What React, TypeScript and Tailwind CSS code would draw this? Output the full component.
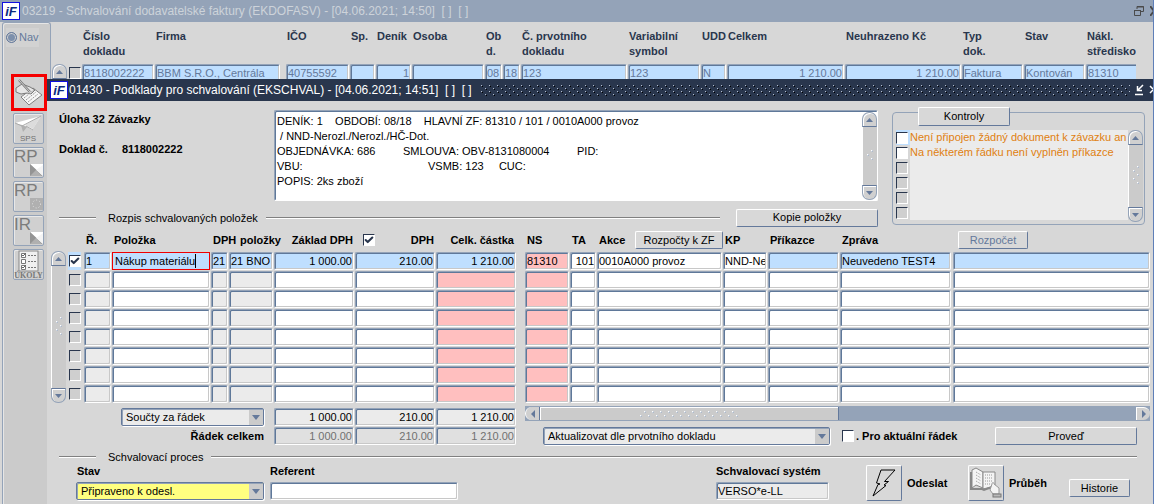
import { useState } from "react"
import type { ReactNode } from "react"
import clsx from "clsx"
import { Check } from "lucide-react"

const bevel =
  "block w-full h-[18px] rounded-[2px] border border-t-[#94a3b8] border-l-[#94a3b8] border-r-white border-b-white shadow-[inset_1px_1px_0_#5f7899,inset_-1px_-1px_0_#c8c8c8] px-px text-[11px] leading-4 outline-none"

const raised =
  "rounded-[2px] border border-t-white border-l-white border-b-[#64799b] border-r-[#64799b] bg-[#d8d8d8] text-[11px] font-normal leading-none"

const tones = {
  white: "bg-white text-black",
  blue: "bg-[#bfdfff] text-black",
  pink: "bg-[#ffbfbf] text-black",
  gray: "bg-[#ebebeb] text-black",
  muted: "bg-[#e0e0e0] text-[#707070]",
  dim: "bg-[#bfdfff] text-[#64799b]",
}

type Tone = keyof typeof tones

interface FieldProps {
  label: string
  value?: string
  tone?: Tone
  right?: boolean
  id?: string
}

function Field({ label, value = "", tone = "white", right, id }: FieldProps) {
  return (
    <input
      id={id}
      aria-label={id ? undefined : label}
      defaultValue={value}
      className={clsx(bevel, tones[tone], right && "text-right")}
    />
  )
}

interface TickProps {
  label?: string
  checked?: boolean
  tone?: "white" | "gray"
  id?: string
}

function Tick({ label, checked = false, tone = "white", id }: TickProps) {
  const [on, setOn] = useState(checked)
  return (
    <span className="relative block size-[12px] shrink-0">
      <input
        id={id}
        type="checkbox"
        aria-label={label}
        checked={on}
        onChange={(e) => setOn(e.target.checked)}
        className={clsx(
          "block size-[12px] appearance-none border border-t-[#29364d] border-l-[#29364d] border-r-white border-b-white",
          tone === "white" ? "bg-white" : "bg-[#cfcfcf]"
        )}
      />
      {on && (
        <Check
          size={10}
          strokeWidth={5}
          className="pointer-events-none absolute left-px top-px text-[#29364d]"
        />
      )}
    </span>
  )
}

interface DropDownProps {
  id?: string
  label?: string
  value: string
  tone?: string
  className?: string
}

function DropDown({ id, label, value, tone = "bg-[#ebebeb]", className }: DropDownProps) {
  return (
    <span
      className={clsx(
        "relative block h-[18px] rounded-[2px] border border-[#64799b] shadow-[inset_1px_1px_0_#94a3b8,1px_1px_0_#fff]",
        tone,
        className
      )}
    >
      <select
        id={id}
        aria-label={label}
        className="block h-4 w-full appearance-none bg-transparent pl-1 pr-4 text-[11px] leading-4 outline-none"
      >
        <option>{value}</option>
      </select>
      <span className="pointer-events-none absolute right-0 top-px flex h-[15px] w-[14px] items-center justify-center bg-[#cbcbcb]">
        <svg width="8" height="5" viewBox="0 0 8 5">
          <path d="M0 0h8L4 5z" fill="#64799b" />
        </svg>
      </span>
    </span>
  )
}

function Arrow({ dir }: { dir: "up" | "down" }) {
  return (
    <button
      type="button"
      aria-label={dir === "up" ? "Nahoru" : "Dolů"}
      className={clsx(
        "flex h-[15px] w-full shrink-0 items-center justify-center border border-[#94a3b8] bg-[#d0d0d0] shadow-[inset_1px_1px_0_#fff]",
        dir === "up" ? "rounded-t-[7px] border-b-[#64799b]" : "rounded-b-[7px] border-t-[#64799b]"
      )}
    >
      <svg width="7" height="4" viewBox="0 0 7 4">
        <path d={dir === "up" ? "M0 4L3.500 0L7 4z" : "M0 0h7L3.500 4z"} fill="#64799b" />
      </svg>
    </button>
  )
}

function VScroll({ className, dots = 5 }: { className?: string; dots?: number }) {
  return (
    <div className={clsx("flex w-[15px] shrink-0 flex-col", className)}>
      <Arrow dir="up" />
      <div className="flex flex-1 items-center justify-center border-l border-white bg-[#cbcbcb]">
        <svg width="8" height={dots * 4} viewBox={`0 0 8 ${dots * 4}`}>
          {Array.from({ length: dots }, (_, i) => (
            <g key={i}>
              <rect x={i % 2 ? 1 : 5} y={i * 4} width="2" height="2" fill="#94a3b8" />
              <rect x={i % 2 ? 1 : 5} y={i * 4} width="1.500" height="1.500" fill="#fff" />
            </g>
          ))}
        </svg>
      </div>
      <Arrow dir="down" />
    </div>
  )
}

function Logo() {
  return (
    <span className="flex size-[18px] shrink-0 items-center justify-center border border-[#1010e0] bg-white text-[13px] font-bold italic leading-none text-[#0a2a80]">
      iF
    </span>
  )
}

function Divider({ children, end }: { children: ReactNode; end?: ReactNode }) {
  return (
    <div className="flex h-[17px] items-center">
      <span className="h-[2px] w-[37px] border-t border-[#808080] bg-white" />
      <span className="ml-3 mr-2 text-[11px] leading-4">{children}</span>
      <span className="h-[2px] flex-1 border-t border-[#808080] bg-white" />
      {end}
    </div>
  )
}

const tool =
  "flex size-[31px] shrink-0 items-center justify-center rounded-[2px] border border-[#94a3b8] bg-[#d0d0d0] shadow-[inset_1px_1px_0_#e8e8e8]"

function LetterTool({ text, round }: { text: string; round?: boolean }) {
  return (
    <button type="button" aria-label={text} className={tool}>
      <svg width="29" height="29" viewBox="0 0 29 29">
        <text x="0" y="14" fontSize="17" fill="#7c7c7c">{text}</text>
        {round ? (
          <g fill="#b0b0b0">
            <rect x="16" y="16" width="13" height="12" />
            <circle cx="22.500" cy="22" r="4" fill="none" stroke="#e6e6e6" strokeDasharray="1 2" />
          </g>
        ) : (
          <g>
            <path d="M16 16h13v12z" fill="#fff" />
            <path d="M16 16v12h13z" fill="#949494" />
            <path d="M22 22l7 6V17z" fill="#f4f4f4" />
            <path d="M16 28h12l-6-6z" fill="#b0b0b0" />
          </g>
        )}
      </svg>
    </button>
  )
}

function Toolbar() {
  return (
    <nav className="flex w-[49px] shrink-0 flex-col rounded-tl-[3px] rounded-tr-[3px] border border-b-0 border-[#94a3b8] bg-[#cbcbcb] pl-[3px] pt-[5px] shadow-[inset_1px_1px_0_#e6e6e6]">
      <label className="flex h-[19px] w-[33px] items-center gap-[2px] bg-[#d2d2d2] text-[11px] text-[#64799b]">
        <input
          type="radio"
          defaultChecked
          className="size-[11px] shrink-0 appearance-none rounded-full border border-[#64799b] bg-[#7d90ac] shadow-[inset_0_0_0_1px_#d2d2d2]"
        />
        Nav
      </label>
      <div className="mt-[27px] flex flex-col gap-[3px] pl-[7px]">
        <div className="-ml-[2px] -mb-px mr-auto border-[3px] border-[#f50000]">
          <button type="button" aria-label="Podpis" className="flex h-[31px] w-[30px] items-center justify-center bg-[#d0d0d0]">
            <svg width="28" height="28" viewBox="0 0 28 28" strokeLinejoin="round">
              <path d="M6 18l12-9 9 7-13 10z" fill="#f6f6f6" stroke="#808080" />
              <path d="M1 9l6-4 8 3 5 3-4 4-4-1-6 1-5-2z" fill="#e6e6e6" stroke="#7a7a7a" />
              <path d="M4 1l11 12" stroke="#777" strokeWidth="2.400" />
              <path d="M4 1l11 12" stroke="#e8e8e8" strokeWidth=".8" />
              <path d="M9 19l10-8M11 21l10-8M13 23l10-8" stroke="#999" strokeDasharray="2 1" />
            </svg>
          </button>
        </div>
        <button type="button" aria-label="SPS" className={tool}>
          <svg width="29" height="29" viewBox="0 0 29 29">
            <path d="M1 9l26-7-9 14-6-4z" fill="#fff" />
            <path d="M27 2L11 11l8 4z" fill="#dcdcdc" />
            <path d="M7 11l2 7 4-5z" fill="#b0b0b0" />
            <path d="M1 9l7 3L27 2M12 12l7 4" fill="none" stroke="#aaa" />
            <text x="6" y="27" fontSize="8" fill="#707070">SPS</text>
          </svg>
        </button>
        <LetterTool text="RP" />
        <LetterTool text="RP" round />
        <LetterTool text="IR" />
        <button type="button" aria-label="Úkoly" className={tool}>
          <svg width="29" height="29" viewBox="0 0 29 29">
            <rect x="5" y="1" width="19" height="20" fill="#f0f0f0" stroke="#888" />
            <path d="M7.500 3.500h4v4h-4zM7.500 9.500h4v4h-4zM7.500 15.500h4v4h-4z" fill="#fff" stroke="#777" />
            <path d="M14 5.500h8M14 11.500h8M14 17.500h8" stroke="#777" strokeDasharray="2 1" />
            <path d="M8 5l1 1 3-3M8 17l1 1 3-3" fill="none" stroke="#666" />
            <text x="14.500" y="28" fontSize="8" fontWeight="bold" textAnchor="middle" fill="#777" fontFamily="Liberation Serif">ÚKOLY</text>
          </svg>
        </button>
      </div>
    </nav>
  )
}

interface InvoiceColumn {
  head: ReactNode
  name: string
  width: string
  value: string
  right?: boolean
}

const invoiceColumns: InvoiceColumn[] = [
  { head: <>Číslo<br />dokladu</>, name: "Číslo dokladu", width: "w-[73px]", value: "8118002222" },
  { head: "Firma", name: "Firma", width: "w-[126px]", value: "BBM S.R.O., Centrála" },
  { head: "", name: "", width: "w-[5px]", value: "" },
  { head: "IČO", name: "IČO", width: "w-[64px]", value: "40755592" },
  { head: "Sp.", name: "Sp.", width: "w-[26px]", value: "" },
  { head: "Deník", name: "Deník", width: "w-[36px]", value: "1", right: true },
  { head: "Osoba", name: "Osoba", width: "w-[73px]", value: "" },
  { head: <>Ob<br />d.</>, name: "Období", width: "w-[18px]", value: "08" },
  { head: "", name: "Rok", width: "w-[18px]", value: "18" },
  { head: <>Č. prvotního<br />dokladu</>, name: "Č. prvotního dokladu", width: "w-[107px]", value: "123" },
  { head: <>Variabilní<br />symbol</>, name: "Variabilní symbol", width: "w-[73px]", value: "123" },
  { head: "UDD", name: "UDD", width: "w-[26px]", value: "N" },
  { head: "Celkem", name: "Celkem", width: "w-[118px]", value: "1 210.00", right: true },
  { head: "Neuhrazeno Kč", name: "Neuhrazeno Kč", width: "w-[117px]", value: "1 210.00", right: true },
  { head: <>Typ<br />dok.</>, name: "Typ dok.", width: "w-[62px]", value: "Faktura" },
  { head: "Stav", name: "Stav", width: "w-[62px]", value: "Kontován" },
  { head: <>Nákl.<br />středisko</>, name: "Nákl. středisko", width: "w-[73px]", value: "81310" },
]

function InvoiceStrip() {
  return (
    <div className="mr-[17px] flex h-[57px] overflow-hidden pl-px">
      <VScroll className="mt-[42px] h-[60px]" />
      <table className="w-[1092px] shrink-0 table-fixed border-collapse">
        <thead>
          <tr className="h-[42px]">
            <th className="w-[15px]" />
            {invoiceColumns.map((c, i) => (
              <th
                key={i}
                className={clsx(
                  "whitespace-nowrap p-0 pl-px pt-[7px] text-left align-top text-[11px] font-bold leading-[15px] text-[#29364d]",
                  c.width
                )}
              >
                {c.head}
              </th>
            ))}
          </tr>
        </thead>
        <tbody>
          <tr>
            <td className="p-0 pl-[2px]">
              <Tick label="Vybrat doklad" tone="gray" />
            </td>
            {invoiceColumns.map((c, i) => (
              <td key={i} className="p-0 pr-px">
                {c.name && <Field label={c.name} value={c.value} right={c.right} tone="dim" />}
              </td>
            ))}
          </tr>
        </tbody>
      </table>
    </div>
  )
}

const description = [
  "DENÍK: 1    OBDOBÍ: 08/18    HLAVNÍ ZF: 81310 / 101 / 0010A000 provoz",
  " / NND-Nerozl./Nerozl./HČ-Dot.",
  "OBJEDNÁVKA: 686         SMLOUVA: OBV-8131080004         PID:",
  `VBU:${" ".repeat(41)}VSMB: 123     CUC:`,
  "POPIS: 2ks zboží",
].join("\n")

const checks = [
  "Není připojen žádný dokument k závazku an",
  "Na některém řádku není vyplněn příkazce",
  "",
  "",
  "",
  "",
]

function Checks() {
  return (
    <section className="flex w-[253px] shrink-0 flex-col pt-[6px]">
      <div className="flex h-[113px] flex-col rounded-[4px] border border-[#94a3b8] pl-[3px] pr-px">
        <button type="button" className={clsx(raised, "-mt-[6px] ml-[22px] h-[19px] w-[92px] shrink-0")}>
          Kontroly
        </button>
        <div className="mt-1 flex">
          <ul className="min-w-0 flex-1">
            {checks.map((text, i) => (
              <li key={i} className="flex h-[15px] items-center">
                <span className={clsx("flex h-[15px] w-[14px] items-center", i === 0 && "bg-[#bfdfff]")}>
                  <Tick id={`check-${i}`} label={text || "Kontrola"} tone={text ? "white" : "gray"} />
                </span>
                <label
                  htmlFor={`check-${i}`}
                  className="h-[15px] min-w-0 flex-1 whitespace-nowrap bg-[#ebebeb] text-[11px] leading-[15px] text-[#e08010]"
                >
                  {text}
                </label>
              </li>
            ))}
          </ul>
          <VScroll className="h-[92px]" />
        </div>
      </div>
    </section>
  )
}

const th = "p-0 pl-[2px] text-left align-bottom text-[11px] font-bold leading-[22px] whitespace-nowrap"
const rows = [0, 1, 2, 3, 4, 5, 6, 7]

function ItemsTable() {
  return (
    <table className="w-[449px] table-fixed border-collapse">
      <thead>
        <tr className="h-[25px]">
          <th className="w-[17px] p-0" />
          <th className={clsx(th, "w-[28px]")}>Ř.</th>
          <th className={clsx(th, "w-[99px]")}>Položka</th>
          <th className={clsx(th, "w-[18px]")}>DPH</th>
          <th className={clsx(th, "w-[45px]")}>
            <span className="pl-[9px]">položky</span>
          </th>
          <th className={clsx(th, "w-[81px] pr-[2px] text-right")}>Základ DPH</th>
          <th className={clsx(th, "w-[81px] pr-[2px]")}>
            <span className="flex items-center justify-between pl-[6px]">
              <Tick label="Počítat DPH" checked />
              DPH
            </span>
          </th>
          <th className={clsx(th, "w-[80px] pr-[2px] text-right")}>Celk. částka</th>
        </tr>
      </thead>
      <tbody>
        {rows.map((r) => {
          const first = r === 0
          return (
            <tr key={r} className="h-[19px]">
              <td className="p-0">
                <span className={clsx("mr-[3px] ml-px flex h-[18px] items-center pl-px", first && "bg-[#bfdfff]")}>
                  <Tick label={`Řádek ${r + 1}`} checked={first} tone={first ? "white" : "gray"} />
                </span>
              </td>
              <td className="p-0 pr-px">
                <Field label="Ř." value={first ? "1" : ""} tone={first ? "blue" : "gray"} />
              </td>
              <td className="p-0 pr-px">
                {first ? (
                  <span className="flex h-[18px] items-center border border-[#f00000] bg-[#bfdfff]">
                    <input
                      aria-label="Položka"
                      defaultValue="Nákup materiálu"
                      className="field-sizing-content border-r border-black bg-transparent pl-[2px] text-[11px] leading-[14px] outline-none"
                    />
                  </span>
                ) : (
                  <Field label="Položka" />
                )}
              </td>
              <td className="p-0 pr-px">
                <Field label="DPH" value={first ? "21" : ""} tone={first ? "blue" : "gray"} />
              </td>
              <td className="p-0 pr-px">
                <Field label="DPH položky" value={first ? "21 BNO" : ""} tone={first ? "blue" : "gray"} />
              </td>
              <td className="p-0 pr-px">
                <Field label="Základ DPH" value={first ? "1 000.00" : ""} tone={first ? "blue" : "white"} right />
              </td>
              <td className="p-0 pr-px">
                <Field label="DPH" value={first ? "210.00" : ""} tone={first ? "blue" : "white"} right />
              </td>
              <td className="p-0">
                <Field label="Celk. částka" value={first ? "1 210.00" : ""} tone={first ? "blue" : "pink"} right />
              </td>
            </tr>
          )
        })}
      </tbody>
    </table>
  )
}

function AllocationTable() {
  return (
    <table className="w-full table-fixed border-collapse">
      <thead>
        <tr className="h-[25px]">
          <th className={clsx(th, "w-[45px]")}>NS</th>
          <th className={clsx(th, "w-[27px]")}>TA</th>
          <th className={clsx(th, "w-[126px]")}>
            <span className="flex items-center justify-between">
              Akce
              <button type="button" className={clsx(raised, "h-[18px] w-[88px]")}>
                Rozpočty k ZF
              </button>
            </span>
          </th>
          <th className={clsx(th, "w-[45px]")}>KP</th>
          <th className={clsx(th, "w-[72px]")}>Příkazce</th>
          <th className={clsx(th, "w-[113px]")}>Zpráva</th>
          <th className={th}>
            <span className="flex h-[22px] items-center">
              <button
                type="button"
                disabled
                className={clsx(raised, "ml-[3px] h-[18px] w-[70px] text-[#64799b]")}
              >
                Rozpočet
              </button>
            </span>
          </th>
        </tr>
      </thead>
      <tbody>
        {rows.map((r) => {
          const first = r === 0
          return (
            <tr key={r} className="h-[19px]">
              <td className="p-0 pr-px">
                <Field label="NS" value={first ? "81310" : ""} tone="pink" />
              </td>
              <td className="p-0 pr-px">
                <Field label="TA" value={first ? "101" : ""} right />
              </td>
              <td className="p-0 pr-px">
                <Field label="Akce" value={first ? "0010A000 provoz" : ""} />
              </td>
              <td className="p-0 pr-px">
                <Field label="KP" value={first ? "NND-Nerozl." : ""} />
              </td>
              <td className="p-0 pr-px">
                <Field label="Příkazce" tone={first ? "blue" : "white"} />
              </td>
              <td className="p-0 pr-[2px]">
                <Field label="Zpráva" value={first ? "Neuvedeno TEST4" : ""} tone={first ? "blue" : "white"} />
              </td>
              <td className="p-0">
                <Field label="Rozpočet" tone={first ? "blue" : "white"} />
              </td>
            </tr>
          )
        })}
      </tbody>
    </table>
  )
}

function Totals() {
  return (
    <div className="mt-[5px] flex flex-col gap-px pr-[9px]">
      <div className="flex items-center justify-end">
        <DropDown label="Součty" value="Součty za řádek" className="mr-[10px] w-[143px]" />
        <div className="grid grid-cols-[80px_80px_80px] gap-px">
          <Field label="Základ DPH" value="1 000.00" tone="gray" right />
          <Field label="DPH" value="210.00" tone="gray" right />
          <Field label="Celk. částka" value="1 210.00" tone="gray" right />
        </div>
      </div>
      <div className="flex items-center justify-end">
        <span className="mr-[10px] text-[11px] font-bold">Řádek celkem</span>
        <div className="grid grid-cols-[80px_80px_80px] gap-px">
          <Field label="Základ DPH celkem" value="1 000.00" tone="muted" right />
          <Field label="DPH celkem" value="210.00" tone="muted" right />
          <Field label="Částka celkem" value="1 210.00" tone="muted" right />
        </div>
      </div>
    </div>
  )
}

function HScroll() {
  return (
    <div className="mt-[3px] flex h-[15px] bg-[#94a3b8] py-px">
      <button
        type="button"
        aria-label="Vlevo"
        className="flex w-[14px] items-center justify-center rounded-l-[7px] border-l border-white bg-[#d0d0d0]"
      >
        <svg width="4" height="8" viewBox="0 0 4 8">
          <path d="M4 0v8L0 4z" fill="#64799b" />
        </svg>
      </button>
      <div className="flex w-[48%] items-center justify-center border-x border-[#64799b] bg-[#cbcbcb] shadow-[inset_1px_1px_0_#fff]">
        <svg width="100" height="8">
          <defs>
            <pattern id="grip" width="8" height="8" patternUnits="userSpaceOnUse">
              <path d="M1 5h2v2h-2zM5 1h2v2h-2z" fill="#94a3b8" />
              <path d="M1 5h1.500v1.500h-1.500zM5 1h1.500v1.500h-1.500z" fill="#fff" />
            </pattern>
          </defs>
          <rect width="100" height="8" fill="url(#grip)" />
        </svg>
      </div>
      <button
        type="button"
        aria-label="Vpravo"
        className="ml-auto flex w-[14px] items-center justify-center rounded-r-[7px] border-l border-t border-white bg-[#d0d0d0]"
      >
        <svg width="4" height="8" viewBox="0 0 4 8">
          <path d="M0 0v8l4-4z" fill="#64799b" />
        </svg>
      </button>
    </div>
  )
}

function ApprovalProcess() {
  return (
    <div className="flex items-start pl-[29px] pr-[23px] text-[11px] font-bold">
      <div className="w-[188px]">
        <label htmlFor="state" className="block h-[17px] pl-px leading-3">Stav</label>
        <DropDown id="state" value="Připraveno k odesl." tone="bg-[#ffff80] font-normal" />
      </div>
      <div className="ml-[6px] w-[188px] font-normal">
        <label htmlFor="referent" className="block h-[17px] font-bold leading-3">Referent</label>
        <Field id="referent" label="Referent" />
      </div>
      <div className="ml-auto w-[113px] font-normal">
        <label htmlFor="system" className="block h-[17px] font-bold leading-3">Schvalovací systém</label>
        <Field id="system" label="Schvalovací systém" value="VERSO*e-LL" tone="gray" />
      </div>
      <button type="button" aria-label="Odeslat" className={clsx(raised, "ml-[37px] flex size-9 items-center justify-center")}>
        <svg width="26" height="28" viewBox="0 0 26 28">
          <path d="M10 1h14L13.500 12.500h4L13 16l2 .5L2 27l5-11.500 2-.5-3.500-1z" fill="none" stroke="#000" />
        </svg>
      </button>
      <span className="ml-[5px] w-[42px] leading-9">Odeslat</span>
      <button type="button" aria-label="Průběh" className={clsx(raised, "ml-[19px] flex size-9 items-center justify-center")}>
        <svg width="34" height="32" viewBox="0 0 34 32">
          <path d="M3 3l4-2 7 4v16l-7-3-4 3z" fill="#f4f4f4" stroke="#888" />
          <path d="M14 5h12v14l-12 3z" fill="#f4f4f4" stroke="#888" />
          <path d="M2 5v17h11l2 1 8-3" fill="none" stroke="#888" strokeWidth="2" />
          <path d="M7 5l5 3M7 8l5 3M7 11l5 3M7 14l5 3M16 8h8M16 11h8M16 14h8M16 17h6" stroke="#999" strokeDasharray="1 1" />
          <path d="M23 17c0-2 2-2 2 0l5 4v6h-6l-3-4z" fill="#f4f4f4" stroke="#999" />
          <rect x="24" y="27" width="8" height="3" fill="#b8b8b8" stroke="#777" />
        </svg>
      </button>
      <span className="ml-[5px] w-[42px] leading-9">Průběh</span>
      <button type="button" className={clsx(raised, "ml-[18px] mt-[14px] h-[18px] w-[61px]")}>
        Historie
      </button>
    </div>
  )
}

function Restore() {
  return (
    <svg width="10" height="10" viewBox="0 0 10 10" fill="none" stroke="#4a4a4a">
      <path d="M.5 4.500h6v5h-6zM3 3V.5h6.500v5H7" />
      <path d="M0 4.500h7M3 1h7" />
    </svg>
  )
}

function ApprovalWindow() {
  return (
    <section className="relative -ml-1 flex flex-1 flex-col bg-[#d7d7d7]">
      <header className="flex h-[22px] items-center bg-[#29364d] pl-[3px] text-[12px] text-white">
        <Logo />
        <h2 className="ml-[1px] whitespace-pre">01430 - Podklady pro schvalování (EKSCHVAL) - [04.06.2021; 14:51]  [ ]  [ ]</h2>
        <svg className="ml-2 h-3 min-w-0 flex-1">
          <defs>
            <pattern id="dots" width="8" height="6" patternUnits="userSpaceOnUse">
              <path d="M1 1h1v1h-1zM5 4h1v1h-1z" fill="#b4bece" />
              <path d="M2 2h1v1h-1zM6 5h1v1h-1z" fill="#000" />
            </pattern>
          </defs>
          <rect width="100%" height="12" fill="url(#dots)" />
        </svg>
        <svg className="ml-1" width="19" height="12" viewBox="0 0 19 12" fill="none" stroke="#fff">
          <path d="M1 10.500h8M9 1L4 6M3.500 2v4.500H8" strokeWidth="1.500" />
          <path d="M16 2l3 3M16 9l3-3" strokeWidth="1.500" />
        </svg>
      </header>

      <div className="flex gap-[14px] pl-3 pr-2 pt-[5px]">
        <div className="min-w-0 flex-1 pt-1">
          <div className="flex">
            <dl className="w-[215px] shrink-0 pt-[2px] text-[11px] font-bold leading-[14px]">
              <dt>Úloha 32 Závazky</dt>
              <div className="mt-4 flex">
                <dt className="w-[63px]">Doklad č.</dt>
                <dd>8118002222</dd>
              </div>
            </dl>
            <div className="flex h-[91px] min-w-0 flex-1 rounded-[2px] border border-t-[#94a3b8] border-l-[#94a3b8] border-r-white border-b-white bg-white shadow-[inset_1px_1px_0_#5f7899]">
              <textarea
                aria-label="Popis dokladu"
                defaultValue={description}
                className="block min-w-0 flex-1 resize-none overflow-hidden pl-[2px] pt-[3px] text-[11px] leading-[15px] outline-none"
              />
              <VScroll dots={3} className="mt-px" />
            </div>
          </div>
          <div className="mt-2">
            <Divider
              end={
                <button type="button" className={clsx(raised, "ml-4 h-[18px] w-[142px]")}>
                  Kopie položky
                </button>
              }
            >
              Rozpis schvalovaných položek
            </Divider>
          </div>
        </div>
        <Checks />
      </div>

      <div className="flex pl-1 pr-[3px]">
        <div className="w-[474px] shrink-0">
          <div className="flex gap-px">
            <VScroll className="mt-[25px]" />
            <ItemsTable />
          </div>
          <Totals />
        </div>
        <div className="min-w-0 flex-1">
          <AllocationTable />
          <HScroll />
          <div className="mt-[6px] flex items-center pl-[18px] pr-[13px]">
            <DropDown label="Akce nad dokladem" value="Aktualizovat dle prvotního dokladu" className="w-[287px]" />
            <label className="ml-3 flex items-center gap-[2px] text-[11px] font-bold">
              <Tick />
              . Pro aktuální řádek
            </label>
            <button type="button" className={clsx(raised, "ml-auto h-[18px] w-[142px]")}>
              Proveď
            </button>
          </div>
        </div>
      </div>

      <div className="mt-[3px] pl-3 pr-4">
        <Divider>Schvalovací proces</Divider>
      </div>
      <ApprovalProcess />
    </section>
  )
}

export default function App() {
  return (
    <div className="flex min-h-screen flex-col overflow-hidden border-r border-[#5f7fb8] bg-[#d7d7d7] font-['Liberation_Sans',Arial,sans-serif] text-black">
      <header className="flex h-[22px] items-center bg-[#94a3b8] pl-[2px] text-[12px] text-[#cdd3da]">
        <Logo />
        <h1 className="ml-[2px] whitespace-pre">
          03219 - Schvalování dodavatelské faktury (EKDOFASV) - [04.06.2021; 14:50]  [ ]  [ ]
        </h1>
        <div className="ml-auto flex items-center gap-[6px]">
          <Restore />
          <svg width="3" height="10" viewBox="0 0 3 10" stroke="#4a4a4a" strokeWidth="2">
            <path d="M0 0l4 5-4 5" fill="none" />
          </svg>
        </div>
      </header>
      <div className="flex flex-1 pl-[2px]">
        <Toolbar />
        <main className="flex min-w-0 flex-1 flex-col">
          <InvoiceStrip />
          <ApprovalWindow />
        </main>
      </div>
    </div>
  )
}
